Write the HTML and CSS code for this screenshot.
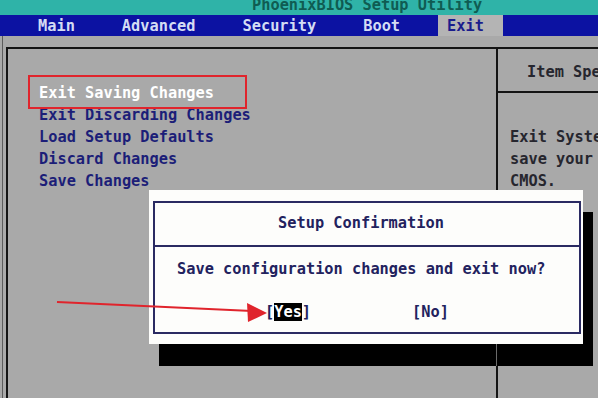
FILE: index.html
```html
<!DOCTYPE html>
<html lang="en">
<head>
    <meta charset="UTF-8">
    <title>PhoenixBIOS Setup Utility</title>
    <link rel="stylesheet" href="styles.css">
</head>
<body>
    <div class="title"><span>PhoenixBIOS Setup Utility</span></div>
    <div class="menubar">
        <span class="tab">Main</span>
        <span class="tab">Advanced</span>
        <span class="tab">Security</span>
        <span class="tab">Boot</span>
        <span class="tab active">Exit</span>
    </div>
    <div class="main">
        <div class="frame">
            <div class="left">
                <ul class="options">
                    <li class="current">Exit Saving Changes</li>
                    <li>Exit Discarding Changes</li>
                    <li>Load Setup Defaults</li>
                    <li>Discard Changes</li>
                    <li>Save Changes</li>
                </ul>
            </div>
            <div class="help">
                <div class="help-head">Item Specific Help</div>
                <div class="help-body">Exit System Setup and<br>save your changes to<br>CMOS.</div>
            </div>
        </div>
    </div>

    <div class="mark"></div>

    <div class="dialog">
        <div class="dialog-box">
            <div class="dialog-title">Setup Confirmation</div>
            <div class="dialog-msg">Save configuration changes and exit now?</div>
            <div class="dialog-btns">
                <span>[<span class="sel">Yes</span>]</span>
                <span>[No]</span>
            </div>
        </div>
    </div>

    <svg class="arrow" width="598" height="398" viewBox="0 0 598 398">
        <line x1="57" y1="302" x2="252" y2="311" stroke="#e0242c" stroke-width="2"/>
        <polygon points="267,313 247,303 248,322" fill="#e0242c"/>
    </svg>
</body>
</html>
```

FILE: styles.css
```css
body {
    margin: 0;
    width: 598px;
    height: 398px;
    overflow: hidden;
    display: flex;
    flex-direction: column;
    background-color: #a9a9a9;
    font-family: "DejaVu Sans Mono", monospace;
    font-size: 15.3px;
    font-weight: bold;
    white-space: nowrap;
}
.title {
    height: 15px;
    overflow: hidden;
    background-color: #2fb3a8;
    color: #0f5c52;
    padding-left: 252px;
}
.title span {
    display: block;
    line-height: 18px;
    margin-top: -4px;
}
.menubar {
    height: 21px;
    display: flex;
    gap: 29px;
    padding-left: 29px;
    background-color: #0c12a2;
    color: #d4dcf4;
    line-height: 23px;
}
.tab {
    padding: 0 9px;
}
.tab.active {
    background-color: #b4b4b4;
    color: #1a1c8c;
    padding-right: 19px;
}
.main {
    flex: 1;
    margin-left: 2px;
    border-left: 1px solid #5c5c5c;
    display: flex;
    flex-direction: column;
}
.frame {
    flex: 1;
    margin-top: 11px;
    margin-left: 3px;
    border-top: 2px solid #141414;
    border-left: 2px solid #141414;
    display: flex;
}
.left {
    flex: none;
    width: 488px;
}
.options {
    list-style: none;
    margin: 0;
    padding: 33px 0 0 31px;
    line-height: 22px;
    color: #1c1e78;
}
.options .current {
    color: #ffffff;
}
.help {
    flex: 1;
    min-width: 0;
    overflow: hidden;
    border-left: 2px solid #141414;
    color: #26262e;
    line-height: 22px;
}
.help-head {
    padding: 12px 0 8px 29px;
    border-bottom: 2px solid #141414;
}
.help-body {
    padding: 33px 0 0 12px;
}
.mark {
    position: absolute;
    left: 28px;
    top: 75px;
    width: 215px;
    height: 30px;
    border: 2px solid #e0242c;
}
.dialog {
    position: absolute;
    left: 149px;
    top: 190px;
    width: 434px;
    height: 154px;
    box-sizing: border-box;
    padding: 11px 2px 10px 4px;
    background-color: #fdfdfb;
    box-shadow: 10px 22px 0 #000;
}
.dialog::before {
    content: "";
    position: absolute;
    left: 347px;
    top: 154px;
    width: 1px;
    height: 22px;
    background-color: #6a6a6a;
}
.dialog-box {
    height: 100%;
    box-sizing: border-box;
    border: 2px solid #2a2a62;
    color: #22225e;
    line-height: 22px;
}
.dialog-title {
    padding: 9px 12px 11px 0;
    text-align: center;
    border-bottom: 2px solid #2a2a62;
}
.dialog-msg {
    padding: 11px 0 0 22px;
}
.dialog-btns {
    margin-top: 21px;
    padding-left: 110px;
    display: flex;
    gap: 101px;
}
.sel {
    background-color: #000;
    color: #fff;
}
.arrow {
    position: absolute;
    left: 0;
    top: 0;
}
```
